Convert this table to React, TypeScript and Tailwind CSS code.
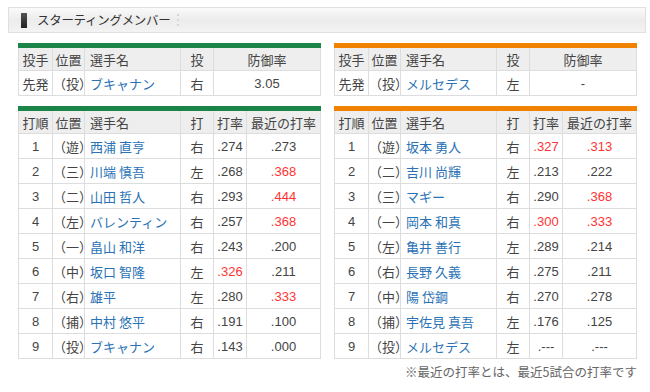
import React from 'react'

type Batter = {
  order: number
  pos: string
  name: string
  hand: string
  avg: string
  recent: string
  avgHot?: boolean
  recentHot?: boolean
}

type Team = {
  color: string
  pitcher: { name: string; hand: string; era: string }
  batters: Batter[]
}

const teams: Team[] = [
  {
    color: 'border-t-[#1a8449]',
    pitcher: { name: 'ブキャナン', hand: '右', era: '3.05' },
    batters: [
      { order: 1, pos: '（遊）', name: '西浦 直亨', hand: '右', avg: '.274', recent: '.273' },
      { order: 2, pos: '（三）', name: '川端 慎吾', hand: '左', avg: '.268', recent: '.368', recentHot: true },
      { order: 3, pos: '（二）', name: '山田 哲人', hand: '右', avg: '.293', recent: '.444', recentHot: true },
      { order: 4, pos: '（左）', name: 'バレンティン', hand: '右', avg: '.257', recent: '.368', recentHot: true },
      { order: 5, pos: '（一）', name: '畠山 和洋', hand: '右', avg: '.243', recent: '.200' },
      { order: 6, pos: '（中）', name: '坂口 智隆', hand: '左', avg: '.326', recent: '.211', avgHot: true },
      { order: 7, pos: '（右）', name: '雄平', hand: '左', avg: '.280', recent: '.333', recentHot: true },
      { order: 8, pos: '（捕）', name: '中村 悠平', hand: '右', avg: '.191', recent: '.100' },
      { order: 9, pos: '（投）', name: 'ブキャナン', hand: '右', avg: '.143', recent: '.000' },
    ],
  },
  {
    color: 'border-t-[#f08200]',
    pitcher: { name: 'メルセデス', hand: '左', era: '-' },
    batters: [
      { order: 1, pos: '（遊）', name: '坂本 勇人', hand: '右', avg: '.327', recent: '.313', avgHot: true, recentHot: true },
      { order: 2, pos: '（二）', name: '吉川 尚輝', hand: '左', avg: '.213', recent: '.222' },
      { order: 3, pos: '（三）', name: 'マギー', hand: '右', avg: '.290', recent: '.368', recentHot: true },
      { order: 4, pos: '（一）', name: '岡本 和真', hand: '右', avg: '.300', recent: '.333', avgHot: true, recentHot: true },
      { order: 5, pos: '（左）', name: '亀井 善行', hand: '左', avg: '.289', recent: '.214' },
      { order: 6, pos: '（右）', name: '長野 久義', hand: '右', avg: '.275', recent: '.211' },
      { order: 7, pos: '（中）', name: '陽 岱鋼', hand: '右', avg: '.270', recent: '.278' },
      { order: 8, pos: '（捕）', name: '宇佐見 真吾', hand: '左', avg: '.176', recent: '.125' },
      { order: 9, pos: '（投）', name: 'メルセデス', hand: '左', avg: '.---', recent: '.---' },
    ],
  },
]

// base cell styles, colour added per cell so classes don't fight
const th = 'h-[25px] p-0 border border-[#dddddd] bg-[#eeeeee] font-normal text-[13px] text-[#444]'
const td = 'h-[25px] p-0 border border-[#dddddd] bg-white text-[13px]'
const dark = 'text-[#444]'
const link = 'text-[#2a72b5]'
const red = 'text-[#ff3333]'
const num = 'font-["Liberation_Sans",sans-serif] text-[12px]'

function PitcherTable({ team }: { team: Team }) {
  return (
    <table className={`w-[303px] table-fixed border-collapse border-t-[5px] ${team.color}`}>
      <thead>
        <tr>
          <th className={`${th} w-[34px]`}>投手</th>
          <th className={`${th} w-[32px]`}>位置</th>
          <th className={`${th} w-[96px] text-left pl-[5px]`}>選手名</th>
          <th className={`${th} w-[33px]`}>投</th>
          <th className={th}>防御率</th>
        </tr>
      </thead>
      <tbody>
        <tr>
          <td className={`${td} ${dark} text-center`}>先発</td>
          <td className={`${td} ${dark} text-center`}>（投）</td>
          <td className={`${td} ${link} pl-[5px]`}>{team.pitcher.name}</td>
          <td className={`${td} ${dark} text-center`}>{team.pitcher.hand}</td>
          <td className={`${td} ${dark} ${num} text-center`}>{team.pitcher.era}</td>
        </tr>
      </tbody>
    </table>
  )
}

function LineupTable({ team }: { team: Team }) {
  return (
    <table className={`w-[303px] table-fixed border-collapse border-t-[5px] ${team.color}`}>
      <thead>
        <tr>
          <th className={`${th} w-[34px]`}>打順</th>
          <th className={`${th} w-[32px]`}>位置</th>
          <th className={`${th} w-[96px] text-left pl-[5px]`}>選手名</th>
          <th className={`${th} w-[33px]`}>打</th>
          <th className={`${th} w-[33px]`}>打率</th>
          <th className={th}>最近の打率</th>
        </tr>
      </thead>
      <tbody>
        {team.batters.map((b) => (
          <tr key={b.order}>
            <td className={`${td} ${dark} ${num} text-center`}>{b.order}</td>
            <td className={`${td} ${dark} text-center`}>{b.pos}</td>
            <td className={`${td} ${link} pl-[5px]`}>{b.name}</td>
            <td className={`${td} ${dark} text-center`}>{b.hand}</td>
            <td className={`${td} ${num} text-center ${b.avgHot ? red : dark}`}>{b.avg}</td>
            <td className={`${td} ${num} text-center ${b.recentHot ? red : dark}`}>{b.recent}</td>
          </tr>
        ))}
      </tbody>
    </table>
  )
}

export default function App() {
  return (
    <div className='w-[650px] h-[392px] bg-white pt-[7px] pl-[8px] font-["Noto_Sans_CJK_JP","Noto_Sans",sans-serif] leading-none'>
      {/* title bar */}
      <div className="w-[638px] h-[26px] flex items-center border border-[#e0e0e0] bg-gradient-to-b from-[#fafafa] via-[#ececec] to-[#f3f3f3]">
        <div className="ml-[12px] w-[6px] h-[15px] bg-gradient-to-b from-[#555] to-[#222]" />
        <span className="ml-[10px] text-[12.5px] text-[#333] tracking-[-0.3px]">スターティングメンバー</span>
        <div className="ml-[7px] flex flex-col gap-[3px]">
          <span className="w-[2px] h-[2px] bg-[#d6d6d6]" />
          <span className="w-[2px] h-[2px] bg-[#d6d6d6]" />
          <span className="w-[2px] h-[2px] bg-[#d6d6d6]" />
        </div>
      </div>

      <div className="flex gap-[13px] pl-[10px] mt-[10px]">
        {teams.map((team, i) => (
          <div key={i} className="flex flex-col gap-[10px]">
            <PitcherTable team={team} />
            <LineupTable team={team} />
          </div>
        ))}
      </div>

      <div className="w-[629px] mt-[7px] text-right text-[12.5px] text-[#666]">
        ※最近の打率とは、最近5試合の打率です
      </div>
    </div>
  )
}
